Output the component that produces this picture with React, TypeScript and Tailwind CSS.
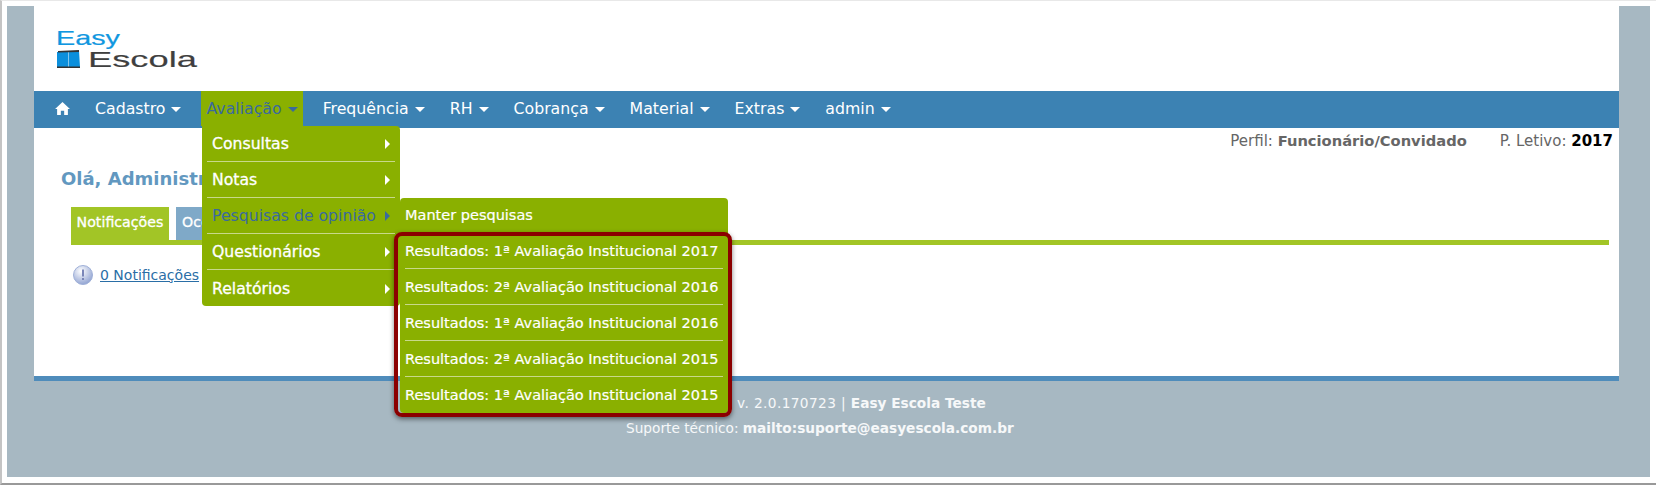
import React from 'react';

const navItems = ['Cadastro', 'Avaliação', 'Frequência', 'RH', 'Cobrança', 'Material', 'Extras', 'admin'];
const menuItems = ['Consultas', 'Notas', 'Pesquisas de opinião', 'Questionários', 'Relatórios'];
const results = [
  'Resultados: 1ª Avaliação Institucional 2017',
  'Resultados: 2ª Avaliação Institucional 2016',
  'Resultados: 1ª Avaliação Institucional 2016',
  'Resultados: 2ª Avaliação Institucional 2015',
  'Resultados: 1ª Avaliação Institucional 2015',
];

function Caret() {
  return <span className="ml-[6px] inline-block border-x-[5px] border-t-[5px] border-x-transparent border-t-current align-middle" />;
}

function Arrow() {
  return <span className="inline-block border-y-[5px] border-l-[5px] border-y-transparent border-l-current" />;
}

function Logo() {
  return (
    <div className="relative h-[50px] w-[150px] font-['Liberation_Sans',sans-serif]">
      <div className="absolute left-0 top-[-2px] origin-left scale-x-[1.37] text-[21px] leading-[21px] text-[#1097e0] [-webkit-text-stroke:0.2px_#1097e0]">Easy</div>
      <svg className="absolute left-[1px] top-[21px]" width="23" height="18" viewBox="0 0 23 18">
        <path d="M0 2 L11 1.5 L11 17 L0 17 Z" fill="#0b8fdc" />
        <path d="M11.5 1.5 L22 1 L23 17 L11.5 17 Z" fill="#0b8fdc" />
        <path d="M1 1 L22 0 L22 2 L1 2.5 Z M0 16.5 L23 16.5 L23 18 L0 18 Z" fill="#333" />
      </svg>
      <div className="absolute left-[32px] top-[20px] origin-left scale-x-[1.65] text-[22px] leading-[22px] text-[#3f3f3f] [-webkit-text-stroke:0.15px_#3f3f3f]">Escola</div>
    </div>
  );
}

export default function App() {
  return (
    <div className="h-[485px] w-[1656px] overflow-hidden border-b-2 border-l-2 border-t border-b-[#999] border-l-[#c4c4c4] border-t-[#e8e8e8] bg-white pl-[5px] pr-[6px] pt-[5px] font-['DejaVu_Sans',sans-serif]">
      <div className="flex h-[471px] flex-col bg-[#a7b8c2]">
        <div className="relative ml-[27px] mr-[31px] flex h-[370px] flex-col bg-white">
          <div className="h-[85px] pl-[22px] pt-[23px]">
            <Logo />
          </div>
          {/* main nav */}
          <nav className="flex h-[37px] gap-[15px] bg-[#3c82b3] pl-[21px] text-[15.75px] text-white">
            <div className="flex h-[35px] w-[20px] items-center">
              <svg width="15" height="13" viewBox="0 0 16 14" fill="white">
                <path d="M8 0 L16 7.5 L13.8 7.5 L13.8 14 L9.8 14 L9.8 9.5 L6.2 9.5 L6.2 14 L2.2 14 L2.2 7.5 L0 7.5 Z" />
              </svg>
            </div>
            {navItems.map((item) => (
              <div key={item} className={`flex h-[35px] items-center px-[5px] pt-[1px] ${item === 'Avaliação' ? 'bg-[#8ab000] text-[#3a6a9e]' : ''}`}>
                {item}
                <Caret />
              </div>
            ))}
          </nav>

          <div className="flex justify-end pr-[6px] pt-[2px] text-[15px] text-[#666]">
            <span>
              Perfil: <b className="text-[14.7px]">Funcionário/Convidado</b>
            </span>
            <span className="ml-[33px]">
              P. Letivo: <b className="text-black">2017</b>
            </span>
          </div>

          <h1 className="pl-[27px] pt-[14px] text-[18px] font-bold leading-[24px] text-[#6298c0]">Olá, Administrador</h1>

          <div className="ml-[37px] mr-[10px] mt-[16px] flex h-[38px] gap-[7px] border-b-[5px] border-[#a2c526] text-[14.2px] text-white [-webkit-text-stroke:0.3px_white]">
            <div className="flex w-[98px] items-center justify-center bg-[#a2c526]">Notificações</div>
            <div className="flex w-[120px] items-center bg-[#7fa9c8] pl-[6px]">Ocorrências</div>
          </div>

          <div className="mt-[20px] flex items-center pl-[39px] text-[14px]">
            <svg width="20" height="20" viewBox="0 0 20 20">
              <defs>
                <radialGradient id="info" cx="40%" cy="30%" r="75%">
                  <stop offset="0%" stopColor="#ffffff" />
                  <stop offset="100%" stopColor="#8c9fd0" />
                </radialGradient>
              </defs>
              <circle cx="10" cy="10" r="9.5" fill="url(#info)" stroke="#9fb0d8" />
              <rect x="9" y="4.5" width="2" height="7" fill="#7a86b8" />
              <rect x="9" y="13" width="2" height="2" fill="#7a86b8" />
            </svg>
            <a className="ml-[7px] text-[#2a6ea6] underline">0 Notificações</a>
          </div>

          {/* dropdown */}
          <div className="absolute left-[168px] top-[120px] w-[198px] rounded-b-[4px] rounded-tr-[4px] bg-[#8ab000] px-[5px] text-[15.7px] text-white">
            {menuItems.map((item, i) => (
              <div
                key={item}
                className={`flex h-[36px] items-center justify-between px-[5px] pt-[1px] ${i < menuItems.length - 1 ? 'border-b border-[#c8d98a]' : ''} ${item === 'Pesquisas de opinião' ? 'text-[#3a6a9e]' : '[-webkit-text-stroke:0.3px_white]'}`}
              >
                {item}
                <Arrow />
              </div>
            ))}
          </div>

          {/* submenu */}
          <div className="absolute left-[366px] top-[192px] w-[328px] rounded-[4px] bg-[#8ab000] px-[5px] text-[14.5px] text-white">
            <div className="flex h-[35px] items-center border-b border-[#c8d98a] pt-[2px] [-webkit-text-stroke:0.2px_white]">Manter pesquisas</div>
            {results.map((item, i) => (
              <div key={item} className={`flex h-[36px] items-center pt-[2px] [-webkit-text-stroke:0.2px_white] ${i < results.length - 1 ? 'border-b border-[#c8d98a]' : ''}`}>
                {item}
              </div>
            ))}
          </div>

          {/* annotation box */}
          <div className="absolute left-[360px] top-[226px] h-[185px] w-[338px] rounded-[8px] border-[4px] border-[#8b0000] shadow-[0_2px_5px_rgba(0,0,0,0.5)]" />
        </div>
        <div className="ml-[27px] mr-[31px] h-[5px] bg-[#4f8cbb]" />
        <div className="pt-[10px] text-[13.7px] leading-[25px] text-white/90">
          <div className="pl-[730px]">
            <span className="tracking-[0.4px]">v. 2.0.170723 | </span>
            <b>Easy Escola Teste</b>
          </div>
          <div className="pl-[619px]">
            Suporte técnico: <b>mailto:suporte@easyescola.com.br</b>
          </div>
        </div>
      </div>
    </div>
  );
}
